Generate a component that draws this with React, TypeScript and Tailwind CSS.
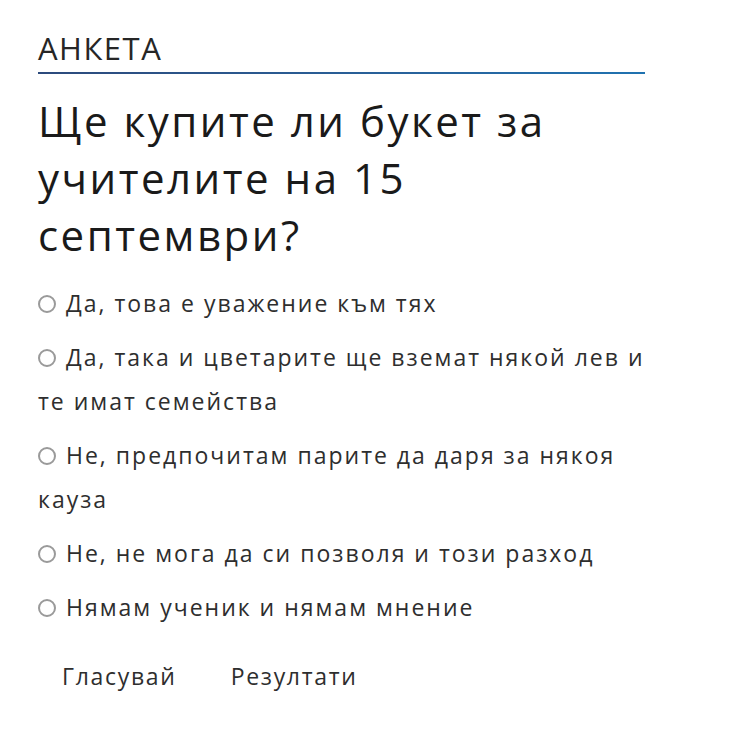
const options = [
  "Да, това е уважение към тях",
  "Да, така и цветарите ще вземат някой лев и те имат семейства",
  "Не, предпочитам парите да даря за някоя кауза",
  "Не, не мога да си позволя и този разход",
  "Нямам ученик и нямам мнение",
];

export default function App() {
  return (
    <main className="min-h-screen bg-white px-[38px] pt-[28px] text-[#2e2e2e] font-['Open_Sans',sans-serif]">
      <div className="w-[607px]">
        <h2 className="text-[31px] leading-[40px] tracking-[1.5px] text-[#262626] pb-[4px]">АНКЕТА</h2>
        <div className="h-[2px] bg-gradient-to-r from-[#2c4a7c] to-[#1f72b0]" />
        <h3 className="mt-[18px] text-[42px] leading-[57px] tracking-[2.5px] text-[#1a1a1a]">
          Ще купите ли букет за учителите на 15 септември?
        </h3>
        <form className="mt-[18px]">
          {options.map((opt, i) => (
            <label key={i} className="block mb-[10px] text-[23px] leading-[44px] tracking-[2px]">
              <span className="inline-block align-[-1px] w-[18px] h-[18px] rounded-full border-2 border-[#9a9a9a] mr-[10px]" />
              {opt}
            </label>
          ))}
          <div className="flex gap-[54px] pl-[24px] mt-[25px] text-[23px] leading-[44px] tracking-[1.7px]">
            <button type="button">Гласувай</button>
            <button type="button">Резултати</button>
          </div>
        </form>
      </div>
    </main>
  );
}
